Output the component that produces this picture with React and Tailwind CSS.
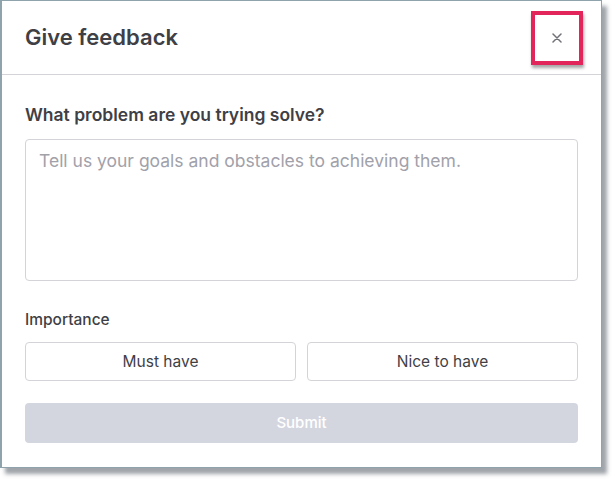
export default function App() {
  return (
    <div className="w-[612px] h-[479px] bg-white relative" style={{ fontFamily: "Inter, 'Noto Sans', sans-serif" }}>
      <div className="w-[602px] h-[468px] bg-white border-l-2 border-t border-r border-b border-[#8fa3ad] shadow-[5px_6px_4px_rgba(80,90,100,0.55)] flex flex-col">
        <div className="h-[74px] border-b border-[#d4d4d8] flex items-center justify-between px-[23px] relative">
          <h1 className="text-[22px] font-semibold text-[#3f3f46] leading-[28px] pb-[2px]">Give feedback</h1>
          <button className="w-[30px] h-[30px] flex items-center justify-center text-[#71717a] mr-[6px]">
            <svg width="10" height="10" viewBox="0 0 10 10" fill="none" stroke="currentColor" strokeWidth="1.5" strokeLinecap="round">
              <path d="M1 1L9 9M9 1L1 9" />
            </svg>
          </button>
          <div className="absolute left-[529px] top-[10px] w-[52px] h-[54px] border-[4px] border-[#e2255a] shadow-[1px_3px_3px_rgba(0,0,0,0.35)]"></div>
        </div>
        <div className="px-[23px] pt-[28px] flex flex-col">
          <label className="text-[17.5px] font-semibold text-[#3f3f46] leading-[24px]">What problem are you trying solve?</label>
          <div className="mt-[12px] h-[142px] border border-[#d4d4d8] rounded-[4px] px-[13px] pt-[9px] text-[17.5px] text-[#a1a1aa] leading-[24px]">
            Tell us your goals and obstacles to achieving them.
          </div>
          <div className="mt-[29px] text-[15.5px] font-medium text-[#3f3f46] leading-[20px]">Importance</div>
          <div className="mt-[12px] flex gap-[11px]">
            <button className="flex-1 h-[39px] border border-[#d4d4d8] rounded-[4px] text-[15.5px] text-[#3f3f46]">Must have</button>
            <button className="flex-1 h-[39px] border border-[#d4d4d8] rounded-[4px] text-[15.5px] text-[#3f3f46]">Nice to have</button>
          </div>
          <button className="mt-[22px] h-[40px] bg-[#d4d6df] rounded-[4px] text-[15px] font-medium text-white">Submit</button>
        </div>
      </div>
    </div>
  );
}
